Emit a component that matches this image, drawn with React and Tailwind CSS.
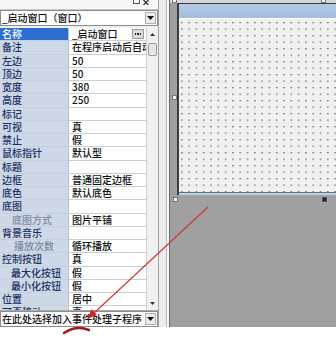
import React from 'react';

const rows = [
  { name: '名称', value: '_启动窗口', selected: true },
  { name: '备注', value: '在程序启动后自动调入本窗口' },
  { name: '左边', value: '50' },
  { name: '顶边', value: '50' },
  { name: '宽度', value: '380' },
  { name: '高度', value: '250' },
  { name: '标记', value: '' },
  { name: '可视', value: '真' },
  { name: '禁止', value: '假' },
  { name: '鼠标指针', value: '默认型' },
  { name: '标题', value: '' },
  { name: '边框', value: '普通固定边框' },
  { name: '底色', value: '默认底色' },
  { name: '底图', value: '' },
  { name: '底图方式', value: '图片平铺', pad: 'pl-[12px]', dim: true },
  { name: '背景音乐', value: '' },
  { name: '播放次数', value: '循环播放', pad: 'pl-[14px]', dim: true },
  { name: '控制按钮', value: '真' },
  { name: '最大化按钮', value: '假', pad: 'pl-[11px]' },
  { name: '最小化按钮', value: '假', pad: 'pl-[11px]' },
  { name: '位置', value: '居中' },
  { name: '可否移动', value: '真' },
];

function DownArrow() {
  return (
    <svg width="7" height="4" viewBox="0 0 7 4">
      <polygon points="0,0 7,0 3.5,4" fill="#111" />
    </svg>
  );
}

function Combo({ text }) {
  return (
    <div className="flex h-[16px] items-center border border-[#8c8c8c] bg-white">
      <span className="min-w-0 flex-1 overflow-hidden whitespace-nowrap pl-[1px] text-[10px] font-medium leading-[14px] text-[#111]">{text}</span>
      <div className="mr-px flex h-[12px] w-[11px] shrink-0 items-center justify-center border border-[#b0b0b0] bg-[#ebebeb]">
        <DownArrow />
      </div>
    </div>
  );
}

function Handle({ className }) {
  return <div className={`absolute h-[5px] w-[5px] border ${className}`} />;
}

export default function App() {
  return (
    <div className="relative h-[339px] w-[336px] overflow-hidden bg-white font-['Noto_Sans_CJK_SC',sans-serif]">
      <div className="flex h-[327px]">
        {/* property panel */}
        <div className="flex w-[169px] shrink-0 bg-[#f0f0f0]">
          <div className="flex w-[158px] flex-col">
            <div className="flex h-[10px] items-start justify-end gap-[3px] overflow-hidden border-b border-[#c8c8c8] bg-[#f7f7f7] pr-[9px]">
              <div className="-mt-[2px] h-[6px] w-[7px] border border-[#555] bg-white" />
              <svg width="6" height="5" viewBox="0 0 6 5" className="block">
                <path d="M0.5 0 L5.5 5 M5.5 0 L0.5 5" stroke="#222" strokeWidth="1.1" />
              </svg>
            </div>
            <Combo text="_启动窗口（窗口）" />
            <div className="h-[2px]" />
            <div className="flex h-[283px] overflow-hidden border-b border-[#a8a8a8]">
              <div className="w-[146px] overflow-hidden bg-white">
                {rows.map((r) => (
                  <div key={r.name} className="flex h-[13.25px] border-b border-[#c9cfd8]">
                    <div
                      className={`flex w-[69px] shrink-0 items-center overflow-hidden whitespace-nowrap border-r border-[#b9c2cf] text-[10px] font-medium leading-[12px] ${
                        r.pad || 'pl-[2px]'
                      } ${
                        r.selected
                          ? 'bg-[#2c6fd1] text-white'
                          : r.dim
                          ? 'bg-[#cdd8e8] text-[#7d8aa0]'
                          : 'bg-[#cdd8e8] text-[#1c3262]'
                      }`}
                    >
                      {r.name}
                    </div>
                    <div className="flex min-w-0 flex-1 items-center overflow-hidden whitespace-nowrap pl-[3px] text-[10px] font-medium leading-[12px] text-[#111]">
                      <span className="min-w-0 flex-1 overflow-hidden">{r.value}</span>
                      {r.selected && (
                        <div className="mr-[2px] flex h-[10px] w-[12px] shrink-0 items-center justify-center gap-[1px] border border-[#9a9a9a] bg-[#dcdcdc]">
                          <span className="h-[1.5px] w-[1.5px] bg-[#222]" />
                          <span className="h-[1.5px] w-[1.5px] bg-[#222]" />
                          <span className="h-[1.5px] w-[1.5px] bg-[#222]" />
                        </div>
                      )}
                    </div>
                  </div>
                ))}
              </div>
              {/* scrollbar */}
              <div className="flex w-[12px] flex-col border-l border-[#d0d0d0] bg-[#f0f0f0]">
                <div className="flex h-[13px] items-center justify-center">
                  <svg width="5" height="3" viewBox="0 0 5 3">
                    <polygon points="0,3 5,3 2.5,0" fill="#333" />
                  </svg>
                </div>
                <div className="mx-[1px] mt-[2px] h-[13px] rounded-[2px] border border-[#9c9c9c] bg-[#e6e6e6]" />
                <div className="flex-1" />
                <div className="flex h-[14px] items-center justify-center">
                  <svg width="5" height="3" viewBox="0 0 5 3">
                    <polygon points="0,0 5,0 2.5,3" fill="#333" />
                  </svg>
                </div>
              </div>
            </div>
            <Combo text="在此处选择加入事件处理子程序" />
          </div>
          <div className="flex flex-1">
            <div className="w-[8px] border-l border-[#a4a4a4] bg-[#ececec]" />
            <div className="w-px bg-[#bdbdbd]" />
            <div className="flex-1 bg-[#f7f7f7]" />
          </div>
        </div>

        {/* design surface */}
        <div className="relative flex-1 overflow-hidden border-l border-[#6c6c6c] bg-[#a0a0a0]">
          <div className="h-[3px] bg-[#d6d6d6]" />
          <div className="ml-[7px] flex h-[192px] w-[220px] flex-col border-l-2 border-t border-[#3c3c3c]">
            <div className="h-[16px] bg-gradient-to-b from-[#b4cbe6] to-[#a3bedd]" />
            <div className="h-px bg-white" />
            <div className="flex-1 bg-[#f0f0f0]">
              <svg width="220" height="173" className="block">
                <defs>
                  <pattern id="dots" x="2" y="3" width="7.3" height="6.5" patternUnits="userSpaceOnUse">
                    <rect width="1.6" height="1.3" fill="#7a7a7a" />
                  </pattern>
                </defs>
                <rect width="220" height="173" fill="url(#dots)" />
              </svg>
            </div>
            <div className="h-px bg-[#6f6f6f]" />
            <div className="h-[2px] bg-[#b3d4ea]" />
          </div>
          <Handle className="left-[2px] top-[-2px] border-[#777] bg-[#f4f4f4]" />
          <Handle className="left-[151px] top-[-2px] border-[#777] bg-[#f4f4f4]" />
          <Handle className="left-[2px] top-[95px] border-[#777] bg-[#f4f4f4]" />
          <Handle className="left-[3px] top-[197px] border-[#777] bg-[#f4f4f4]" />
          <Handle className="left-[152px] top-[197px] border-[#555] bg-[#1c1c5c]" />
        </div>
      </div>

      {/* annotation */}
      <svg className="pointer-events-none absolute left-0 top-0" width="336" height="339">
        <line x1="208" y1="207" x2="93" y2="314" stroke="#c83a3a" strokeWidth="1.2" />
        <polygon points="87,319 97,315 91.6,309.3" fill="#d42424" />
        <path d="M64 333 Q76 325 89 330" stroke="#a31818" strokeWidth="2.5" fill="none" strokeLinecap="round" />
      </svg>
    </div>
  );
}
